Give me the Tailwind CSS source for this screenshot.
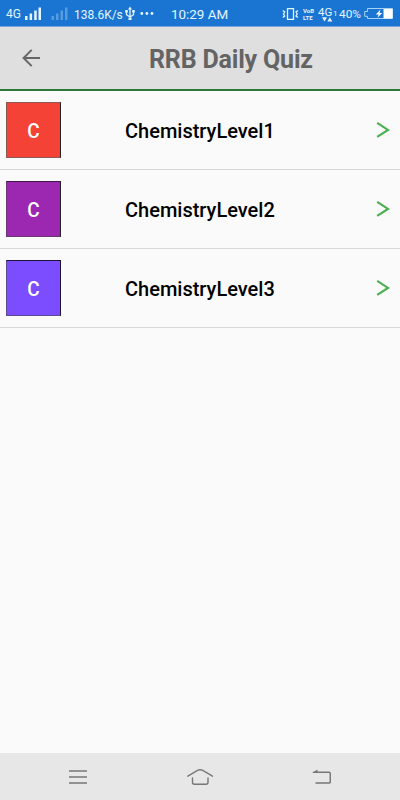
<!DOCTYPE html>
<html lang="en">
<head>
  <meta charset="UTF-8" />
  <meta name="viewport" content="width=device-width, initial-scale=1.0" />
  <title>RRB Daily Quiz</title>
  <script src="https://cdn.jsdelivr.net/npm/@tailwindcss/browser@4"></script>
</head>
<body class="bg-[#fafafa] h-screen flex flex-col overflow-hidden font-[Roboto,sans-serif]">

  <!-- Status bar -->
  <div class="h-[27px] shrink-0 bg-[#1a75d2] border-b border-[#77a5db] text-[#e3f6ff] flex items-center whitespace-nowrap text-xs leading-none pt-0.5">
    <span class="w-[19px] ml-1.5 text-xs">4G</span>
    <svg class="w-[17px] h-3.5 shrink-0" viewBox="0 0 17 14" fill="currentColor">
      <path d="M0 9h2.5v4H0zM4.6 6.5h2.5V13H4.6zM9.2 3.5h2.5V13H9.2zM13.5 0.5H16V13h-2.5z" />
    </svg>
    <svg class="w-[17px] h-3.5 ml-[9px] shrink-0 opacity-30" viewBox="0 0 17 14" fill="currentColor">
      <path d="M0.5 9H3v4H0.5zM5 6.5h2.5V13H5zM9.5 3.5H12V13H9.5zM14 0.5h2.5V13H14z" />
    </svg>
    <span class="w-[50px] ml-1.5 pt-px">138.6K/s</span>
    <svg class="w-3 h-4 shrink-0" viewBox="0 0 12 16" fill="none" stroke="currentColor" stroke-width="1.3">
      <path d="M6 2.5v9M2.5 5.5v3.2L6 11l3.500-2.300V5.500" />
      <path d="M6 0.500L8 3.500H4zM1.200 4h2.600v2.600H1.200zM8.200 4h2.600v2.600H8.200zM4.500 11.500h3v2.500h-3z" fill="currentColor" stroke="none" />
    </svg>
    <svg class="w-3.5 h-3 ml-1 shrink-0" viewBox="0 0 14 12" fill="currentColor">
      <circle cx="1.8" cy="5.5" r="1.4" /><circle cx="6.9" cy="5.5" r="1.4" /><circle cx="12" cy="5.5" r="1.4" />
    </svg>
    <span class="w-[60px] ml-[17px] pt-px text-[13.4px]">10:29 AM</span>
    <svg class="w-[17px] h-3.5 ml-[51px] shrink-0" viewBox="0 0 17 14" fill="none" stroke="currentColor" stroke-width="1.3">
      <path d="M5.500 1.700h6v10.600h-6zM0.800 3.500L2.700 5 1.500 7l1.200 2-1.900 1.500M15.900 3.500L14 5l1.200 2L14 9l1.900 1.500" />
    </svg>
    <span class="w-[13px] ml-1 flex flex-col text-[6px] leading-[7px] font-bold"><span class="h-[7px]">VoB</span><span class="h-[7px]">LTE</span></span>
    <svg class="w-5 h-[18px] ml-0.5 shrink-0" viewBox="0 0 20 18" fill="currentColor">
      <text x="0" y="11" font-size="11.5">4G</text>
      <text x="15" y="11" font-size="8">1</text>
      <path d="M4 12.300h5L6.500 16.500zM9.300 16.500h5L11.800 12.300z" />
    </svg>
    <span class="w-[24px] ml-px pt-px text-[11.8px]">40%</span>
    <svg class="w-[30px] h-3.5 ml-px shrink-0" viewBox="0 0 30 14">
      <path d="M3.500 1.500h25v10h-25V9.300H0.700V4.500h2.800z" fill="none" stroke="#a5d2f5" />
      <path d="M19.500 2H28.500V11.500H19.500z" fill="#fff" />
      <path d="M16.500 2.500L11.800 7.500h2.800L13.500 10.800 18.200 6h-2.600z" fill="#fff" />
    </svg>
  </div>

  <!-- Header -->
  <header class="h-16 shrink-0 bg-[#dfdfdf] border-b-2 border-[#29773a] flex items-center">
    <svg class="w-5 h-5 ml-[21px] shrink-0" viewBox="0 0 20 20" fill="none" stroke="#666" stroke-width="2">
      <path d="M19 10H3M10.700 1.900L2.600 10l8.100 8.100" />
    </svg>
    <h1 class="ml-[108px] pt-0.5 text-[25px] leading-none tracking-[-0.18px] font-bold text-[#646464] whitespace-nowrap">RRB Daily Quiz</h1>
  </header>

  <!-- Quiz list -->
  <main class="grow">
    <div class="h-[79px] border-b border-[#d6d6d6] flex items-center pl-1.5 pr-2.5">
      <div class="w-[55px] h-14 -mt-px bg-[#f44336] border border-[#8a5a55] border-r-[#222] flex items-center justify-center pt-0.5 text-xl font-medium text-white"><span class="scale-x-95">C</span></div>
      <span class="ml-16 pt-px text-xl font-medium text-black">ChemistryLevel1</span>
      <svg class="w-3.5 h-[18px] ml-auto" viewBox="0 0 14 18" fill="none" stroke="#4caf50" stroke-width="2.2">
        <path d="M1.200 1.900L12 8.900 1.200 15.900" />
      </svg>
    </div>
    <div class="h-[79px] border-b border-[#d6d6d6] flex items-center pl-1.5 pr-2.5">
      <div class="w-[55px] h-14 -mt-px bg-[#9c27b0] border border-[#6b3a75] border-t-[#3d1846] border-r-[#222] flex items-center justify-center pt-0.5 text-xl font-medium text-white"><span class="scale-x-95">C</span></div>
      <span class="ml-16 pt-px text-xl font-medium text-black">ChemistryLevel2</span>
      <svg class="w-3.5 h-[18px] ml-auto" viewBox="0 0 14 18" fill="none" stroke="#4caf50" stroke-width="2.2">
        <path d="M1.200 1.900L12 8.900 1.200 15.900" />
      </svg>
    </div>
    <div class="h-[79px] border-b border-[#d6d6d6] flex items-center pl-1.5 pr-2.5">
      <div class="w-[55px] h-14 -mt-px bg-[#7c4dff] border border-[#5c4c92] border-t-[#1d1238] border-r-[#1d1238] flex items-center justify-center pt-0.5 text-xl font-medium text-white"><span class="scale-x-95">C</span></div>
      <span class="ml-16 pt-px text-xl font-medium text-black">ChemistryLevel3</span>
      <svg class="w-3.5 h-[18px] ml-auto" viewBox="0 0 14 18" fill="none" stroke="#4caf50" stroke-width="2.2">
        <path d="M1.200 1.900L12 8.900 1.200 15.900" />
      </svg>
    </div>
  </main>

  <!-- Navigation bar -->
  <nav class="h-[47px] shrink-0 bg-[#e7e7e7] flex items-center justify-between px-[69px] text-[#777]">
    <svg class="w-[18px] h-4" viewBox="0 0 18 16" fill="none" stroke="currentColor" stroke-width="1.5">
      <path d="M0 1.900h18M0 8h18M0 14h18" />
    </svg>
    <svg class="w-[26px] h-[18px] ml-0.5" viewBox="0 0 26 18" fill="none" stroke="currentColor" stroke-width="1.4" stroke-linecap="round">
      <path d="M0.800 8.200L11 2.200Q13.200 1.200 15.300 2.200L25.500 8.200M5.500 10v4.300Q5.500 16.200 7.400 16.200H19Q21 16.200 21 14.300V10" />
    </svg>
    <svg class="w-5 h-4" viewBox="0 0 20 16" fill="none" stroke="currentColor" stroke-width="1.5">
      <path d="M2.500 3.300H18Q19.300 3.300 19.300 5v7.500Q19.300 14 18 14H4.500" />
      <path d="M1 4L6.500 0.500V4z" fill="currentColor" stroke="none" />
    </svg>
  </nav>

</body>
</html>
